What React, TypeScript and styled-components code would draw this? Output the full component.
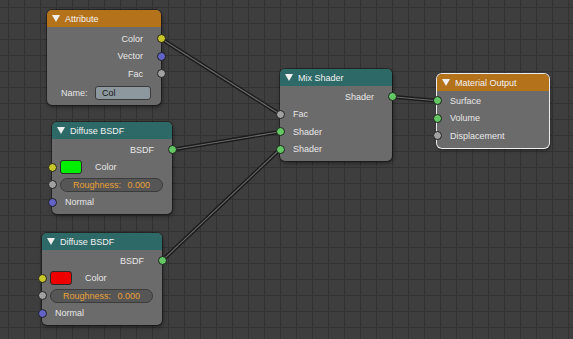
import * as React from "react";
import styled, { createGlobalStyle, css } from "styled-components";

const HEADER_H = 17;
const ROW_H = 17.5;

const SOCKET = {
  yellow: "#c7c729",
  purple: "#6363c7",
  grey: "#a1a1a1",
  green: "#63c763",
};

type SocketColor = keyof typeof SOCKET;
type Tone = "orange" | "teal";

const GlobalStyle = createGlobalStyle`
  html, body {
    margin: 0;
    padding: 0;
    background: #3e3e3e;
  }
  body {
    font-family: "Liberation Sans", Arial, sans-serif;
  }
`;

const Canvas = styled.div`
  position: relative;
  width: 573px;
  height: 339px;
  overflow: hidden;
  background-color: #3e3e3e;
  background-image: linear-gradient(to right, #323232 1px, transparent 1px),
    linear-gradient(to bottom, #323232 1px, transparent 1px);
  background-size: 16px 16px;
  background-position: 8px 7px;
`;

const Links = styled.svg`
  position: absolute;
  left: 0;
  top: 0;
  width: 573px;
  height: 339px;
`;

const NodeBox = styled.div<{ $x: number; $y: number; $w: number; $selected?: boolean }>`
  position: absolute;
  left: ${p => p.$x}px;
  top: ${p => p.$y}px;
  width: ${p => p.$w}px;
  box-sizing: border-box;
  background: #6b6b6b;
  border-radius: 5px;
  padding-bottom: 3px;
  box-shadow: 0 0 0 1px rgba(0, 0, 0, 0.35), 1px 2px 4px rgba(0, 0, 0, 0.45);

  ${p =>
    p.$selected &&
    css`
      box-shadow: 0 0 0 1px #ececec, 1px 2px 4px rgba(0, 0, 0, 0.45);
    `}
`;

const NodeHeader = styled.div<{ $tone: Tone }>`
  height: ${HEADER_H}px;
  display: flex;
  align-items: center;
  gap: 5px;
  padding-left: 5px;
  border-radius: 5px 5px 0 0;
  background: ${p => (p.$tone === "orange" ? "#b4721b" : "#2d6967")};
  color: #f2f2f2;
  font-size: 9px;
`;

const NodeBody = styled.div<{ $pad: number }>`
  padding-top: ${p => p.$pad}px;
`;

const Row = styled.div<{ $out?: boolean; $inset?: number }>`
  position: relative;
  height: ${ROW_H}px;
  display: flex;
  align-items: center;
  justify-content: ${p => (p.$out ? "flex-end" : "flex-start")};
  padding: ${p => (p.$out ? "0 18px 0 0" : `0 9px 0 ${p.$inset ?? 13}px`)};
  color: #e8e8e8;
  font-size: 9px;
  white-space: nowrap;
`;

const Socket = styled.span<{ $out?: boolean; $color: SocketColor }>`
  position: absolute;
  top: 50%;
  ${p => (p.$out ? "right" : "left")}: -4.5px;
  width: 7px;
  height: 7px;
  margin-top: -4.5px;
  border-radius: 50%;
  border: 1px solid #1f1f1f;
  background: ${p => SOCKET[p.$color]};
`;

const Swatch = styled.span<{ $fill: string }>`
  width: 22px;
  height: 14px;
  box-sizing: border-box;
  border: 1px solid #2a2a2a;
  border-radius: 3px;
  background: ${p => p.$fill};
  margin-right: 13px;
`;

const Slider = styled.div`
  flex: 1;
  height: 14px;
  box-sizing: border-box;
  display: flex;
  align-items: center;
  justify-content: space-between;
  padding: 0 12px 0 12px;
  border: 1px solid #3b3b3b;
  border-radius: 7px;
  background: #565656;
  color: #e6a136;
  font-size: 9px;
`;

const FieldLabel = styled.span`
  flex: 1;
`;

const TextField = styled.div`
  width: 56px;
  height: 14px;
  box-sizing: border-box;
  display: flex;
  align-items: center;
  padding-left: 6px;
  border: 1px solid #3a3a3a;
  border-radius: 3px;
  background: #8d989e;
  color: #151515;
  font-size: 9px;
`;

const NameRow = styled(Row)`
  margin-top: 2px;
  padding: 0 10px 0 14px;
`;

function Collapse() {
  return (
    <svg width="8" height="7" viewBox="0 0 8 7">
      <polygon points="0,0 8,0 4,7" fill="#efefef" />
    </svg>
  );
}

interface INodeProps {
  x: number;
  y: number;
  w: number;
  pad?: number;
  tone: Tone;
  title: string;
  selected?: boolean;
  children: React.ReactNode;
}

function Node({ x, y, w, pad = 2, tone, title, selected, children }: INodeProps) {
  return (
    <NodeBox $x={x} $y={y} $w={w} $selected={selected}>
      <NodeHeader $tone={tone}>
        <Collapse />
        {title}
      </NodeHeader>
      <NodeBody $pad={pad}>{children}</NodeBody>
    </NodeBox>
  );
}

const ATTR = { x: 47, y: 10, w: 114, pad: 3 };
const DIFF1 = { x: 52, y: 122, w: 120, pad: 2 };
const DIFF2 = { x: 42, y: 233, w: 120, pad: 2 };
const MIX = { x: 280, y: 69, w: 112, pad: 2 };
const OUT = { x: 437, y: 74, w: 112, pad: 1 };

type NodePos = typeof ATTR;

const rowY = (n: NodePos, i: number) => n.y + HEADER_H + n.pad + ROW_H * i + ROW_H / 2;

const LINKS: [number, number, number, number][] = [
  [ATTR.x + ATTR.w, rowY(ATTR, 0), MIX.x, rowY(MIX, 1)],
  [DIFF1.x + DIFF1.w, rowY(DIFF1, 0), MIX.x, rowY(MIX, 2)],
  [DIFF2.x + DIFF2.w, rowY(DIFF2, 0), MIX.x, rowY(MIX, 3)],
  [MIX.x + MIX.w, rowY(MIX, 0), OUT.x, rowY(OUT, 0)],
];

function DiffuseNode({ pos, fill }: { pos: NodePos; fill: string }) {
  return (
    <Node {...pos} tone="teal" title="Diffuse BSDF">
      <Row $out>
        BSDF
        <Socket $out $color="green" />
      </Row>
      <Row $inset={8}>
        <Socket $color="yellow" />
        <Swatch $fill={fill} />
        Color
      </Row>
      <Row $inset={8}>
        <Socket $color="grey" />
        <Slider>
          <span>Roughness:</span>
          <span>0.000</span>
        </Slider>
      </Row>
      <Row>
        <Socket $color="purple" />
        Normal
      </Row>
    </Node>
  );
}

export default function App() {
  return (
    <Canvas>
      <GlobalStyle />
      <Links viewBox="0 0 573 339">
        {LINKS.map(([x1, y1, x2, y2], i) => (
          <g key={i}>
            <line x1={x1} y1={y1} x2={x2} y2={y2} stroke="#1c1c1c" strokeWidth={4} />
            <line x1={x1} y1={y1} x2={x2} y2={y2} stroke="#6a6a6a" strokeWidth={1.1} />
          </g>
        ))}
      </Links>

      <Node {...ATTR} tone="orange" title="Attribute">
        <Row $out>
          Color
          <Socket $out $color="yellow" />
        </Row>
        <Row $out>
          Vector
          <Socket $out $color="purple" />
        </Row>
        <Row $out>
          Fac
          <Socket $out $color="grey" />
        </Row>
        <NameRow>
          <FieldLabel>Name:</FieldLabel>
          <TextField>Col</TextField>
        </NameRow>
      </Node>

      <DiffuseNode pos={DIFF1} fill="#00ee00" />
      <DiffuseNode pos={DIFF2} fill="#ee0000" />

      <Node {...MIX} tone="teal" title="Mix Shader">
        <Row $out>
          Shader
          <Socket $out $color="green" />
        </Row>
        <Row>
          <Socket $color="grey" />
          Fac
        </Row>
        <Row>
          <Socket $color="green" />
          Shader
        </Row>
        <Row>
          <Socket $color="green" />
          Shader
        </Row>
      </Node>

      <Node {...OUT} tone="orange" title="Material Output" selected>
        <Row>
          <Socket $color="green" />
          Surface
        </Row>
        <Row>
          <Socket $color="green" />
          Volume
        </Row>
        <Row>
          <Socket $color="grey" />
          Displacement
        </Row>
      </Node>
    </Canvas>
  );
}
